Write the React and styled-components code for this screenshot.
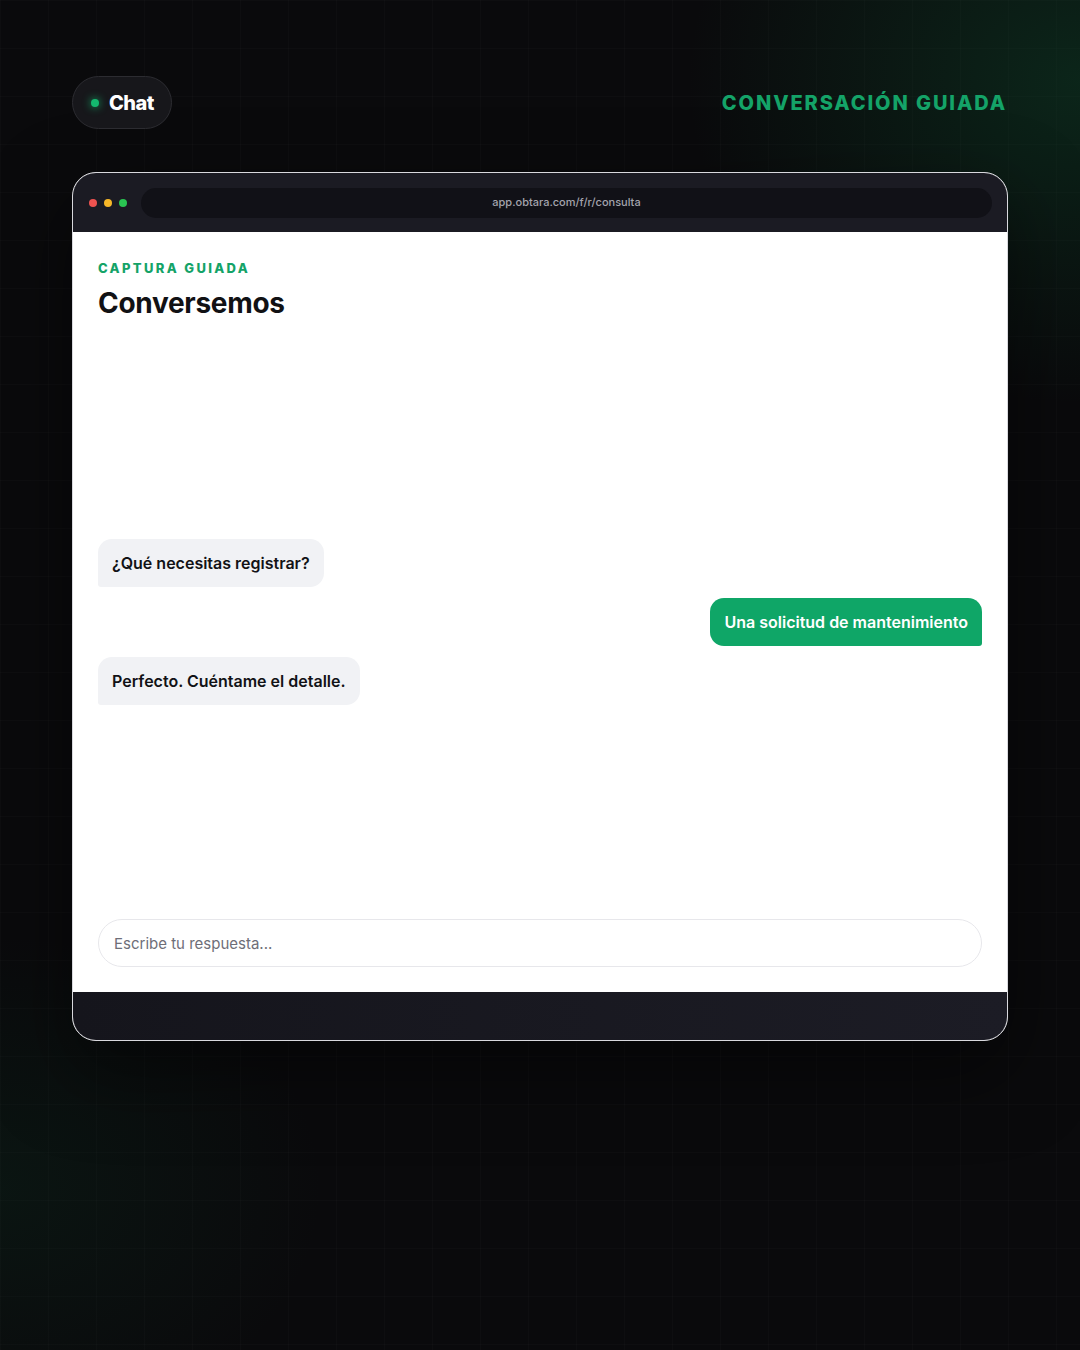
import React from 'react';
import styled, { createGlobalStyle } from 'styled-components';

const GlobalStyle = createGlobalStyle`
  html, body {
    margin: 0;
    padding: 0;
    background: #0a0a0c;
  }
  * {
    box-sizing: border-box;
  }
`;

const Page = styled.div`
  position: relative;
  width: 1080px;
  height: 1350px;
  overflow: hidden;
  padding: 76px 72px 0 72px;
  font-family: Inter, "Noto Sans", "Liberation Sans", sans-serif;
  background:
    radial-gradient(ellipse 560px 460px at 100% 6%, rgba(14, 90, 52, 0.34), transparent 70%),
    radial-gradient(ellipse 460px 360px at 0% 88%, rgba(12, 70, 44, 0.18), transparent 70%),
    linear-gradient(rgba(255, 255, 255, 0.016) 1px, transparent 1px) 0 0 / 48px 48px,
    linear-gradient(90deg, rgba(255, 255, 255, 0.016) 1px, transparent 1px) 0 0 / 48px 48px,
    #0a0a0c;
`;

const TopRow = styled.header`
  display: flex;
  align-items: center;
  justify-content: space-between;
  height: 53px;
  padding-right: 1px;
`;

const Pill = styled.div`
  display: flex;
  align-items: center;
  gap: 10px;
  height: 53px;
  padding: 0 17px 0 18px;
  border-radius: 27px;
  background: #17171b;
  border: 1px solid #2c2c31;
  color: #fff;
  font-size: 20px;
  font-weight: 800;
  letter-spacing: -0.5px;
`;

const Dot = styled.span`
  width: 8px;
  height: 8px;
  border-radius: 50%;
  background: ${(p) => p.color};
  box-shadow: ${(p) => (p.glow ? `0 0 8px ${p.color}` : 'none')};
`;

const Kicker = styled.div`
  color: #14a368;
  font-size: 20px;
  font-weight: 800;
  letter-spacing: 1.9px;
`;

const Window = styled.section`
  margin-top: 43px;
  display: flex;
  flex-direction: column;
  height: 869px;
  border: 1px solid #d9d9de;
  border-radius: 24px;
  overflow: hidden;
  background: #fff;
  box-shadow: 0 30px 80px rgba(0, 0, 0, 0.5);
`;

const TitleBar = styled.div`
  display: flex;
  align-items: center;
  height: 59px;
  padding: 0 15px 0 16px;
  background: #1b1b23;
`;

const Dots = styled.div`
  display: flex;
  gap: 7px;
  margin-right: 14px;
`;

const UrlBar = styled.div`
  flex: 1;
  height: 30px;
  border-radius: 15px;
  background: #111117;
  display: flex;
  align-items: center;
  justify-content: center;
  padding-bottom: 1px;
  color: #a4a4ad;
  font-size: 11px;
  font-weight: 500;
`;

const Body = styled.main`
  flex: 1;
  display: flex;
  flex-direction: column;
  padding: 28px 25px 25px 25px;
`;

const Eyebrow = styled.div`
  color: #14a368;
  font-size: 13px;
  font-weight: 800;
  letter-spacing: 2.35px;
`;

const Title = styled.h1`
  margin: 10px 0 0;
  color: #111114;
  font-size: 28px;
  font-weight: 700;
  letter-spacing: -0.3px;
`;

const Thread = styled.div`
  flex: 1;
  display: flex;
  flex-direction: column;
  justify-content: center;
  gap: 11px;
  padding-top: 4px;
`;

const Bubble = styled.div`
  align-self: ${(p) => (p.mine ? 'flex-end' : 'flex-start')};
  height: 48px;
  display: flex;
  align-items: center;
  padding: 0 14px;
  border-radius: ${(p) => (p.mine ? '14px 14px 3px 14px' : '14px 14px 14px 3px')};
  background: ${(p) => (p.mine ? '#0fa667' : '#f1f2f5')};
  color: ${(p) => (p.mine ? '#fff' : '#121216')};
  font-size: 16px;
  font-weight: 600;
  letter-spacing: 0;
`;

const Composer = styled.div`
  height: 48px;
  border: 1px solid #e7e7eb;
  border-radius: 24px;
  display: flex;
  align-items: center;
  padding: 0 15px;
  color: #6e6e78;
  font-size: 15px;
`;

const Footer = styled.div`
  height: 48px;
  background: linear-gradient(90deg, #15151c, #1c1c25);
`;

const App = () => {
  return (
    <Page>
      <GlobalStyle />
      <TopRow>
        <Pill>
          <Dot color="#14b86f" glow />
          Chat
        </Pill>
        <Kicker>CONVERSACIÓN GUIADA</Kicker>
      </TopRow>
      <Window>
        <TitleBar>
          <Dots>
            <Dot color="#ef5350" />
            <Dot color="#f6b728" />
            <Dot color="#2ac552" />
          </Dots>
          <UrlBar>app.obtara.com/f/r/consulta</UrlBar>
        </TitleBar>
        <Body>
          <Eyebrow>CAPTURA GUIADA</Eyebrow>
          <Title>Conversemos</Title>
          <Thread>
            <Bubble>¿Qué necesitas registrar?</Bubble>
            <Bubble mine>Una solicitud de mantenimiento</Bubble>
            <Bubble>Perfecto. Cuéntame el detalle.</Bubble>
          </Thread>
          <Composer>Escribe tu respuesta...</Composer>
        </Body>
        <Footer />
      </Window>
    </Page>
  );
};

export default App;
